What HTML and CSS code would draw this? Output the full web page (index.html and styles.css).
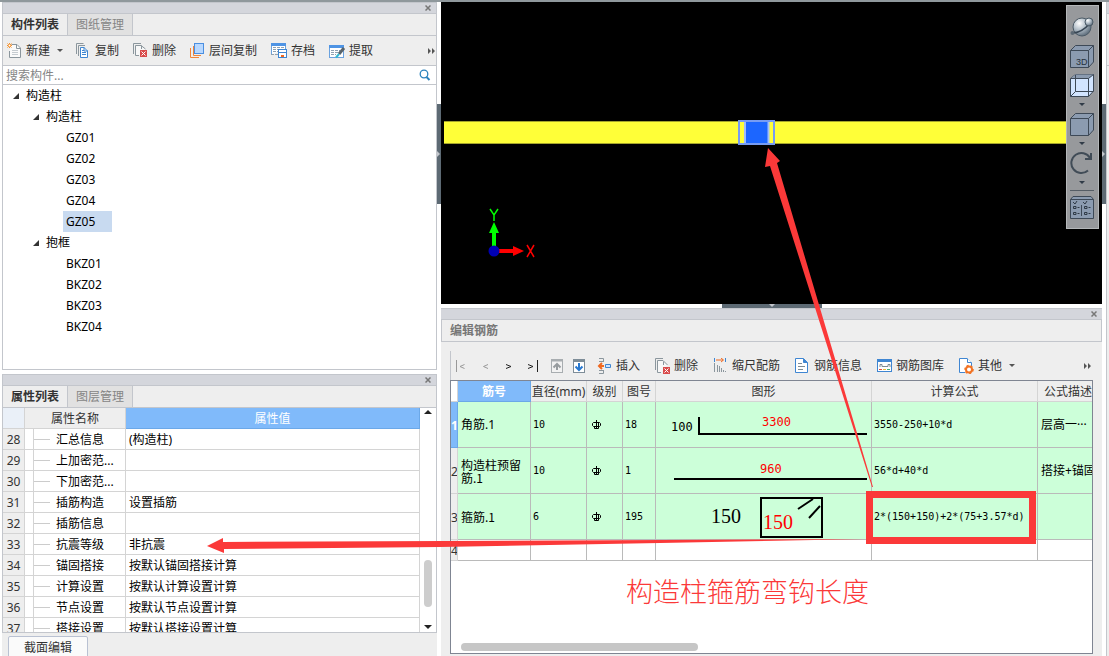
FILE: index.html
```html
<!DOCTYPE html>
<html lang="zh-CN">
<head>
<meta charset="utf-8">
<title>构件列表</title>
<link rel="stylesheet" href="styles.css">
</head>
<body>
<div class="app">
  <aside class="side">
    <section class="panel panel-list">
      <div class="titlebar"><button class="close" aria-label="关闭"><svg width="6" height="6" viewBox="0 0 6 6"><path d="M0.5 0.5L5.500 5.500M5.500 0.500L0.500 5.500"/></svg></button></div>
      <div class="tabs"><button class="tab tab-on">构件列表</button><button class="tab">图纸管理</button></div>
      <div class="toolbar">
        <button class="tool"><svg width="16" height="16" viewBox="0 0 16 16"><path d="M4.500 1.500H10L13.500 5V14.500H2.500V8" fill="#fafafa" stroke="#8b969d"/><path d="M9.500 1.500V5.500H13.500" fill="none" stroke="#8b969d"/><path d="M5 7.500H11M5 9.500H11M5 11.500H11" stroke="#c5cbd0"/><path d="M2.500 0V5M0 2.500H5M.5 .5L4.500 4.500M4.500 .5L.5 4.500" stroke="#f4902b"/><circle cx="2.500" cy="2.500" r="1" fill="#fff"/></svg>新建<i class="caret"></i></button>
        <button class="tool"><svg width="16" height="16" viewBox="0 0 16 16"><path d="M.5 11V.5H7.500" fill="none" stroke="#8b969d"/><path d="M2.500 13V2.500H9" fill="none" stroke="#8b969d"/><path d="M4.500 4.500H8L11.500 8V14.500H4.500Z" fill="#fff" stroke="#3f86d2"/><path d="M8 4V8H12" fill="none" stroke="#3f86d2"/><path d="M6 7.500H8M6 9.500H10M6 11.500H10" stroke="#3f86d2"/></svg>复制</button>
        <button class="tool"><svg width="16" height="16" viewBox="0 0 16 16"><path d="M.5 11V.5H8" fill="none" stroke="#8b969d"/><path d="M6 12.500H2.500V2.500H8L12.500 6" fill="#f7f7f7" stroke="#8b969d"/><path d="M8.500 2.500V6" stroke="#8b969d"/><rect x="7" y="7" width="7" height="7" fill="#d94b4b"/><path d="M8.500 8.500L12.500 12.500M12.500 8.500L8.500 12.500" stroke="#fff"/></svg>删除</button>
        <button class="tool"><svg width="16" height="16" viewBox="0 0 16 16"><path d="M.5 5V14.500H9" fill="none" stroke="#f0853a"/><path d="M3.500 3V12.500H11" fill="none" stroke="#f0853a"/><rect x="4.500" y=".5" width="9" height="10" fill="#b8d8ff" stroke="#4b8fe0"/></svg>层间复制</button>
        <button class="tool"><svg width="17" height="16" viewBox="0 0 17 16"><path d="M.5 11.500V.5H14.500V6" fill="#fff" stroke="#6aa2df"/><rect width="15" height="3" fill="#4f94e4"/><path d="M2 4.500H13M2 6.500H7M2 8.500H7M0 11.500H8" stroke="#8fa1b1" stroke-dasharray="3 1"/><rect x="7.500" y="6.500" width="8" height="8" fill="#fff" stroke="#3f86d2"/><path d="M8 9.500H15" stroke="#3f86d2"/><rect x="10" y="12" width="3" height="2" fill="#f06820"/></svg>存档</button>
        <button class="tool"><svg width="17" height="16" viewBox="0 0 17 16"><rect x=".5" y="2.500" width="14" height="12" fill="#fff" stroke="#6aa2df"/><rect y="2" width="15" height="3" fill="#4f94e4"/><path d="M2 7.500H11M2 9.500H9M2 11.500H7" stroke="#8fa1b1" stroke-dasharray="3 1"/><path d="M15 5L10 11" stroke="#59646c" stroke-width="3"/><path d="M10 11L7 14.500" stroke="#35b9d2" stroke-width="2"/></svg>提取</button>
        <button class="more" aria-label="更多"><svg width="8" height="6" viewBox="0 0 8 6"><path d="M0 0L3 3L0 6ZM4 0L7 3L4 6Z"/></svg></button>
      </div>
      <div class="search"><input type="text" placeholder="搜索构件..." aria-label="搜索构件"><svg width="12" height="12" viewBox="0 0 12 12"><circle cx="5" cy="5" r="3.800" fill="none" stroke="#2c83bd" stroke-width="1.300"/><path d="M7.500 8L10.500 11" stroke="#2c83bd" stroke-width="2"/></svg></div>
      <ul class="tree">
        <li><span class="node branch">构造柱</span>
          <ul>
            <li><span class="node branch">构造柱</span>
              <ul><li><span class="node">GZ01</span></li><li><span class="node">GZ02</span></li><li><span class="node">GZ03</span></li><li><span class="node">GZ04</span></li><li><span class="node node-on">GZ05</span></li></ul></li>
            <li><span class="node branch">抱框</span>
              <ul><li><span class="node">BKZ01</span></li><li><span class="node">BKZ02</span></li><li><span class="node">BKZ03</span></li><li><span class="node">BKZ04</span></li></ul></li>
          </ul></li>
      </ul>
    </section>
    <section class="panel panel-props">
      <div class="titlebar"><button class="close" aria-label="关闭"><svg width="6" height="6" viewBox="0 0 6 6"><path d="M0.5 0.5L5.500 5.500M5.500 0.500L0.500 5.500"/></svg></button></div>
      <div class="tabs"><button class="tab tab-on">属性列表</button><button class="tab">图层管理</button></div>
      <div class="props-body">
        <table class="props">
          <colgroup><col class="p-num"><col class="p-indent"><col class="p-name"><col></colgroup>
          <thead><tr><th class="corner"></th><th colspan="2">属性名称</th><th class="hot">属性值</th></tr></thead>
          <tbody>
            <tr><th>28</th><td></td><td>汇总信息</td><td>(构造柱)</td></tr>
            <tr><th>29</th><td></td><td>上加密范...</td><td></td></tr>
            <tr><th>30</th><td></td><td>下加密范...</td><td></td></tr>
            <tr><th>31</th><td></td><td>插筋构造</td><td>设置插筋</td></tr>
            <tr><th>32</th><td></td><td>插筋信息</td><td></td></tr>
            <tr><th>33</th><td></td><td>抗震等级</td><td>非抗震</td></tr>
            <tr><th>34</th><td></td><td>锚固搭接</td><td>按默认锚固搭接计算</td></tr>
            <tr><th>35</th><td></td><td>计算设置</td><td>按默认计算设置计算</td></tr>
            <tr><th>36</th><td></td><td>节点设置</td><td>按默认节点设置计算</td></tr>
            <tr><th>37</th><td></td><td>搭接设置</td><td>按默认搭接设置计算</td></tr>
          </tbody>
        </table>
        <div class="vscroll"><i class="arrow-up"></i><i class="thumb"></i><i class="arrow-down"></i></div>
      </div>
    </section>
    <div class="side-foot"><button class="section-btn">截面编辑</button></div>
  </aside>
  <div class="gutter"><i class="grip"></i></div>
  <main class="main">
    <div class="viewport">
      <svg class="scene" width="100%" height="100%">
        <rect x="3" y="119" height="23" class="wall-edge"/>
        <rect x="3" y="120" height="21" class="wall"/>
        <rect x="304" y="119" width="24" height="23" fill="#1c66ff"/>
        <path d="M304 119V142M327.500 119V142" stroke="#9ebcff" stroke-width="2"/>
        <rect x="298" y="119" width="35" height="23" fill="none" stroke="#779cf2" stroke-width="2"/>
        <path d="M53 247V229" stroke="#0f0" stroke-width="4"/><path d="M53 220L58 231H48Z" fill="#0f0"/>
        <path d="M55 249H75" stroke="#f00" stroke-width="4"/><path d="M83 249L72 244V254Z" fill="#f00"/>
        <circle cx="53" cy="249" r="5.500" fill="#0000b4"/>
        <path d="M49 207L53 213L57 207M53 213V219" fill="none" stroke="#0f0" stroke-width="1.500"/>
        <path d="M86 243L93 255M93 243L86 255" stroke="#f00" stroke-width="1.500"/>
      </svg>
      <div class="view-tools">
        <button aria-label="动态观察"><svg width="24" height="24" viewBox="0 0 24 24"><defs><radialGradient id="ball" cx=".35" cy=".3" r=".8"><stop offset="0" stop-color="#fff"/><stop offset=".45" stop-color="#b3bfc9"/><stop offset="1" stop-color="#4b5b6a"/></radialGradient></defs><circle cx="12" cy="12" r="9" fill="url(#ball)" stroke="#4b5a66"/><path d="M2 18Q12 18 20 8" fill="none" stroke="#384654" stroke-width="1.500"/><circle cx="19" cy="7" r="4" fill="url(#ball)" stroke="#4b5a66"/><circle cx="2.500" cy="18" r="2" fill="#5b6873"/></svg></button>
        <button aria-label="三维"><svg width="24" height="24" viewBox="0 0 24 24"><path d="M.5 6.500L5.500 1.500H23.500V18L18.500 23.500H.5Z" fill="#8b9bb0" stroke="#3d4957"/><path d="M.5 6.500H18.500V23.500M18.500 6.500L23.500 1.500" fill="none" stroke="#3d4957"/><text x="6" y="21" class="cube-label">3D</text></svg></button>
        <button aria-label="线框"><svg width="24" height="24" viewBox="0 0 24 24"><path d="M.5 5.500L5.500 1.500H23.500V18L18.500 23.500H.5Z" fill="#d2e5ff" stroke="#3d4957"/><path d="M.5 5.500L5.500 1.500H23.500L18.500 5.500Z" fill="#8b9bb0"/><path d="M.5 5.500H18.500V23.500M18.500 5.500L23.500 1.500M5.500 2V18.500H23.500M5.500 18.500L.5 23.500" fill="none" stroke="#3d4957"/></svg></button>
        <i class="caret-box"></i>
        <button aria-label="实体"><svg width="24" height="24" viewBox="0 0 24 24"><path d="M.5 6.500L5.500 1.500H23.500V18L18.500 23.500H.5Z" fill="#8b9bb0" stroke="#3d4957"/><path d="M.5 6.500H18.500V23.500M18.500 6.500L23.500 1.500" fill="none" stroke="#3d4957"/></svg></button>
        <i class="caret-box"></i>
        <button aria-label="旋转"><svg width="24" height="24" viewBox="0 0 24 24"><path d="M18 19.500A10 10 0 1 1 20 7" fill="none" stroke="#414c57" stroke-width="2"/><path d="M21 2V8H15" fill="none" stroke="#414c57" stroke-width="2"/></svg></button>
        <i class="caret-box"></i>
        <hr>
        <button aria-label="显示设置"><svg width="24" height="24" viewBox="0 0 24 24"><path d="M.5 23.500V4.500L3 1.500H21L23.500 4.500V23.500Z" fill="#8b9bb0" stroke="#3d4957"/><path d="M.5 4.500H23.500M11.500 10V21" stroke="#3d4957"/><path d="M3 7L5 9L7 6M13 7L15 9L17 6M3.500 11.500H6V13.500H3.500ZM3.500 17.500H6V19.500H3.500ZM14.500 11.500H17V13.500H14.500ZM14.500 17.500H17V19.500H14.500Z" fill="none" stroke="#2f3a46"/><path d="M7.500 12.500H9.500M7.500 18.500H9.500M18.500 12.500H20.500M18.500 18.500H20.500" stroke="#2f3a46"/></svg></button>
      </div>
    </div>
    <div class="hgutter"><i class="hgrip"></i></div>
    <section class="editor">
      <div class="titlebar"><button class="close" aria-label="关闭"><svg width="6" height="6" viewBox="0 0 6 6"><path d="M0.5 0.5L5.500 5.500M5.500 0.500L0.500 5.500"/></svg></button></div>
      <h2 class="editor-title">编辑钢筋</h2>
      <div class="editor-body">
        <div class="toolbar bar-edit">
          <div class="nav">
            <button class="off" aria-label="首行"><svg width="10" height="12" viewBox="0 0 10 12"><path d="M.5 0V12M8.500 4.500L4 6.500L8.500 8.500"/></svg></button>
            <button class="off" aria-label="上一行"><svg width="10" height="12" viewBox="0 0 10 12"><path d="M8 4.500L3.500 6.500L8 8.500"/></svg></button>
            <button aria-label="下一行"><svg width="10" height="12" viewBox="0 0 10 12"><path d="M2 4.500L7 6.500L2 8.500"/></svg></button>
            <button aria-label="末行"><svg width="10" height="12" viewBox="0 0 10 12"><path d="M0 4.500L5 6.500L0 8.500M9.500 0V12"/></svg></button>
          </div>
          <div class="move">
            <button aria-label="上移"><svg width="12" height="14" viewBox="0 0 12 14"><rect x=".5" y=".5" width="11" height="13" fill="#f2f2f2" stroke="#a8adb0"/><path d="M0 1.500H12" stroke="#a8adb0" stroke-width="2"/><path d="M6 11V5M2.500 8.500L6 5L9.500 8.500" fill="none" stroke="#979c9f" stroke-width="2"/></svg></button>
            <button aria-label="下移"><svg width="12" height="14" viewBox="0 0 12 14"><rect x=".5" y=".5" width="11" height="13" fill="#fff" stroke="#7e8d98"/><path d="M0 1.500H12" stroke="#7e8d98" stroke-width="3"/><path d="M6 4V11M2.500 7.500L6 11L9.500 7.500" fill="none" stroke="#2878d0" stroke-width="2"/></svg></button>
          </div>
          <button class="tool"><svg width="16" height="16" viewBox="0 0 16 16"><path d="M2 .5H6.500V4M2 15.500H6.500V12M2 3.500H6M2 12.500H6" fill="none" stroke="#8b969d"/><path d="M7 8H2M5 5L2 8L5 11" fill="none" stroke="#f06820" stroke-width="2"/><path d="M8.500 6.500H13.500V9.500H8.500Z" fill="#cfe4ff" stroke="#3f86d2"/></svg>插入</button>
          <button class="tool"><svg width="16" height="16" viewBox="0 0 16 16"><path d="M.5 12V.5H8" fill="none" stroke="#8b969d"/><path d="M6 14.500H2.500V2.500H8L12.500 7" fill="#f7f7f7" stroke="#8b969d"/><path d="M8.500 3.500V7" stroke="#8b969d"/><rect x="8" y="9" width="7" height="7" fill="#d94b4b"/><path d="M9.500 10.500L13.500 14.500M13.500 10.500L9.500 14.500" stroke="#fff"/></svg>删除</button>
          <button class="tool"><svg width="16" height="16" viewBox="0 0 16 16"><path d="M1.500 0V4M12.500 0V4" stroke="#3f86d2"/><path d="M3 2H10M8 0L10.500 2L8 4" fill="none" stroke="#f06820"/><path d="M1.500 5V14M4.500 7V14M6.500 8V14M8.500 10V14M10.500 12V14M12.500 13V14" stroke="#8b969d"/></svg>缩尺配筋</button>
          <button class="tool"><svg width="16" height="16" viewBox="0 0 16 16"><path d="M.5 .5H8L12.500 5V14.500H.5Z" fill="#fff" stroke="#3f86d2"/><path d="M8.500 .5V4.500H12.500Z" fill="#3f86d2" stroke="#3f86d2"/><path d="M3 5.500H7M3 8.500H10M3 11.500H8" stroke="#7f8b93"/></svg>钢筋信息</button>
          <button class="tool"><svg width="16" height="16" viewBox="0 0 16 16"><rect x=".5" y="1.500" width="14" height="12" fill="#fff" stroke="#3f86d2"/><path d="M0 2.500H15" stroke="#3f86d2" stroke-width="3"/><path d="M3 9V6.500H5V8.500H11V6.500H13V9" fill="none" stroke="#7f8b93"/><path d="M2 11.500H5" stroke="#e34b42"/><path d="M6 11.500H9" stroke="#e9bd31"/><path d="M10 11.500H13" stroke="#46b276"/></svg>钢筋图库</button>
          <button class="tool"><svg width="16" height="16" viewBox="0 0 16 16"><path d="M6 14.500H.5V.5H8L12.500 5V8" fill="#fff" stroke="#3f86d2"/><path d="M8.500 .5V4.500H12.500" fill="#fff" stroke="#3f86d2"/><circle cx="10" cy="11.500" r="3" fill="#fff" stroke="#f27324" stroke-width="2"/><circle cx="10" cy="11.500" r="4" fill="none" stroke="#f27324" stroke-width="1.500" stroke-dasharray="2 2"/></svg>其他<i class="caret"></i></button>
          <button class="more" aria-label="更多"><svg width="8" height="6" viewBox="0 0 8 6"><path d="M0 0L3 3L0 6ZM4 0L7 3L4 6Z"/></svg></button>
        </div>
        <div class="grid-wrap">
          <table class="grid">
            <colgroup><col class="g-row"><col class="g-no"><col class="g-dia"><col class="g-level"><col class="g-fig"><col><col class="g-formula"><col class="g-desc"></colgroup>
            <thead><tr><th class="blank"></th><th class="hot">筋号</th><th>直径(mm)</th><th>级别</th><th>图号</th><th>图形</th><th>计算公式</th><th class="clip">公式描述</th></tr></thead>
            <tbody>
              <tr><th class="hot">1</th><td class="named">角筋.1</td><td class="mono">10</td><td><svg class="level" width="9" height="10" viewBox="0 0 9 10"><path d="M1.500 2.500H7.500L8.500 3.500V5.500L7.500 6.500H1.500L.5 5.500V3.500ZM4.500 0V9M2.500 6.500V8.500H6.500V2.500"/></svg></td><td class="mono">18</td>
                <td class="shape"><svg width="214" height="45"><text class="num" x="15" y="29">100</text><path d="M43 15V32H211" class="bar"/><text class="num red" x="106" y="24">3300</text></svg></td><td class="mono">3550-250+10*d</td><td class="clip">层高一···</td></tr>
              <tr><th>2</th><td class="song">构造柱预留筋.1</td><td class="mono">10</td><td><svg class="level" width="9" height="10" viewBox="0 0 9 10"><path d="M1.500 2.500H7.500L8.500 3.500V5.500L7.500 6.500H1.500L.5 5.500V3.500ZM4.500 0V9M2.500 6.500V8.500H6.500V2.500"/></svg></td><td class="mono">1</td>
                <td class="shape"><svg width="214" height="45"><path d="M18 31H211" class="bar"/><text class="num red" x="104" y="25">960</text></svg></td><td class="mono">56*d+40*d</td><td class="clip">搭接+锚固</td></tr>
              <tr><th>3</th><td class="song">箍筋.1</td><td class="mono">6</td><td><svg class="level" width="9" height="10" viewBox="0 0 9 10"><path d="M1.500 2.500H7.500L8.500 3.500V5.500L7.500 6.500H1.500L.5 5.500V3.500ZM4.500 0V9M2.500 6.500V8.500H6.500V2.500"/></svg></td><td class="mono">195</td>
                <td class="shape"><svg width="214" height="45"><text class="big" x="55" y="29">150</text><rect x="105" y="4" width="61" height="39" class="bar"/><path d="M142 15L157 5M153 24L164 12" class="bar"/><text class="big red" x="107" y="35">150</text></svg></td><td class="mono">2*(150+150)+2*(75+3.57*d)</td><td></td></tr>
              <tr class="empty"><th>4</th><td></td><td></td><td></td><td></td><td></td><td></td><td></td></tr>
            </tbody>
          </table>
          <i class="hthumb"></i>
        </div>
      </div>
    </section>
  </main>
  <div class="gutter"><i class="grip"></i></div>
  <div class="dock"></div>
  <svg class="notes" width="1109" height="656">
    <path d="M768 148L780 161L777 163L873 487L872 487L770 166L765 167Z"/>
    <path d="M207 546L223 538V542L867 539L660 543L440 547L224 549V553Z"/>
    <rect x="869.500" y="494.500" width="163" height="46" class="frame"/>
    <text x="626" y="602">构造柱箍筋弯钩长度</text>
  </svg>
</div>
</body>
</html>
```
FILE: styles.css
```css
* { box-sizing: border-box; }
body { margin: 0; font: 12px/20px "Noto Sans", "Noto Sans CJK SC", sans-serif; color: #333; background: #fff; }
button { border: 0; padding: 0; background: none; font: inherit; color: inherit; display: flex; align-items: center; }
svg { display: block; flex: none; }
i { display: block; flex: none; }
ul { list-style: none; margin: 0; padding: 0; }
table { border-collapse: separate; border-spacing: 0; table-layout: fixed; width: 100%; }
th { font-weight: normal; }
th, td { padding: 0; overflow: hidden; white-space: nowrap; }

.app { position: relative; display: flex; height: 100vh; min-height: 640px; padding-left: 2px; border-top: 2px solid #8f989c; overflow: hidden; }
.side { width: 435px; flex: none; display: flex; flex-direction: column; }
.panel { border: 1px solid #c3c6cc; background: #fff; display: flex; flex-direction: column; overflow: hidden; }
.panel-list { flex: 1; margin-bottom: 4px; }
.panel-props { height: 259px; flex: none; }
.titlebar { height: 11px; flex: none; background: #d4d6dc; border-bottom: 1px solid #c3c6cc; display: flex; justify-content: flex-end; align-items: center; padding-right: 5px; }
.close path { stroke: #777; stroke-width: 1.5; fill: none; }
.tabs { height: 22px; flex: none; display: flex; background: #eee; border-bottom: 1px solid #c3c6cc; }
.tab { width: 65px; justify-content: center; color: #858585; background: #e1e1e1; border-right: 1px solid #c3c6cc; }
.tab-on { font-weight: 700; color: #333; background: #eee; }
.toolbar { height: 30px; flex: none; display: flex; align-items: center; gap: 14px; padding-left: 4px; background: #eee; border-bottom: 1px solid #c3c6cc; }
.tool { gap: 3px; white-space: nowrap; }
.caret { border: 3px solid transparent; border-top-color: #555; border-bottom: 0; margin: 0 -1px 0 4px; }
.more { margin-left: auto; }
.more path { fill: #555; }
.search { height: 19px; flex: none; display: flex; align-items: center; padding-right: 5px; border-bottom: 1px solid #c3c6cc; }
.search input { flex: 1; min-width: 0; height: 18px; border: 0; padding: 1px 3px 0; font: inherit; outline: 0; background: none; }
.search input::placeholder { color: #858585; opacity: 1; }

.tree { padding-left: 7px; color: #000; line-height: 21px; }
.tree ul { padding-left: 20px; }
.node { display: inline-flex; align-items: center; height: 21px; padding: 0 17px 0 3px; margin-left: 13px; vertical-align: top; }
.branch { margin-left: 3px; padding-left: 0; gap: 7px; }
.branch::before { content: ""; border: 3px solid #333; border-top-color: transparent; border-left-color: transparent; }
.node-on { background: #c8daf0; }

.props-body { flex: 1; min-height: 0; display: flex; align-items: stretch; overflow: hidden; }
.props { flex: 1; width: auto; color: #000; align-self: flex-start; }
.p-num { width: 22px; }
.p-indent { width: 9px; }
.p-name { width: 92px; }
.props th, .props td { height: 21px; padding-top: 1px; line-height: 19px; border-right: 1px solid #d4d4d4; border-bottom: 1px solid #d4d4d4; text-align: left; }
.props th { background: #eee; color: #333; text-align: center; }
.props .corner { background: #eaf0f8; }
.props .hot { background: #80bafa; color: #fff; border-color: #6ba8e8; }
.props td:nth-child(4) { padding-left: 3px; }
.props td:nth-child(3)::before { content: ""; display: inline-block; width: 16px; height: 1px; margin-right: 6px; background: #ccc; vertical-align: 4px; }
.vscroll { width: 16px; flex: none; display: flex; flex-direction: column; align-items: center; padding: 2px 0 3px; }
.arrow-up { border: 4px solid transparent; border-bottom-color: #222; border-top: 0; }
.arrow-down { border: 4px solid transparent; border-top-color: #222; border-bottom: 0; }
.thumb { width: 8px; height: 47px; margin: auto 0 18px; border-radius: 4px; background: #cdcdcd; }
.side-foot { height: 23px; flex: none; background: #eee; padding: 3px 6px 0; overflow: hidden; }
.section-btn { height: 24px; width: 80px; justify-content: center; border: 1px solid #b9c1d2; border-radius: 2px; background: #fafafa; }

.gutter { width: 4px; flex: none; padding-top: 102px; }
.grip { height: 100px; background: #5d6a74; display: flex; align-items: center; }
.grip::before { content: ""; border: 3px solid transparent; border-left-color: #c3c6cc; border-right: 0; }
.dock { width: 3px; flex: none; background: linear-gradient(#d4d6dc 11px, #c3c6cc 11px 12px, #eee 12px 63px, #c3c6cc 63px 64px, #eee 64px); border-left: 1px solid #c3c6cc; }

.main { flex: 1; min-width: 0; display: flex; flex-direction: column; }
.viewport { flex: 1; position: relative; background: #000; overflow: hidden; }
.scene { position: absolute; inset: 0; }
.wall, .wall-edge { width: calc(100% - 39px); fill: #ffff38; }
.wall-edge { fill: #a5a52c; }
.view-tools { position: absolute; top: 3px; right: 3px; width: 33px; padding: 9px 1px 9px 0; border: 1px solid #b5b8ba; background: #97999c; display: flex; flex-direction: column; align-items: center; gap: 5px; }
.view-tools hr { width: 24px; margin: 0 0 -1px; border: 0; border-top: 1px solid #555d65; }
.caret-box { height: 5px; display: flex; align-items: center; }
.caret-box::before { content: ""; border: 3px solid transparent; border-top-color: #303b47; border-bottom: 0; }
.cube-label { font: 9px "Liberation Sans", sans-serif; fill: #26313c; }
.hgutter { height: 4px; flex: none; display: flex; justify-content: center; }
.hgrip { width: 100px; background: #5d6a74; display: flex; justify-content: center; }
.hgrip::before { content: ""; border: 3px solid transparent; border-top-color: #c3c6cc; border-bottom: 0; }

.editor { height: 348px; flex: none; display: flex; flex-direction: column; background: #eee; border-top: 1px solid #c3c6cc; }
.editor-title { height: 22px; flex: none; margin: 0; padding-left: 8px; font-size: 12px; line-height: 21px; font-weight: 700; color: #777; border: 1px solid #c3c6cc; border-top: 0; }
.editor-body { flex: 1; min-height: 0; margin: 9px 9px 2px; display: flex; flex-direction: column; }
.bar-edit { gap: 15px; padding-left: 5px; padding-right: 1px; height: 29px; border: 0; border-left: 1px solid #c3c6cc; }
.nav { display: flex; gap: 14px; margin-right: -2px; }
.nav path { fill: none; stroke: #222; }
.nav .off path { stroke: #999; }
.move { display: flex; gap: 10px; margin-right: -3px; }
.grid-wrap { flex: 1; min-height: 0; display: flex; flex-direction: column; background: #fff; border: 1px solid #7f8592; overflow: hidden; }
.grid { color: #000; }
.g-row { width: 7px; }
.g-no { width: 73px; }
.g-dia { width: 56px; }
.g-level { width: 36px; }
.g-fig { width: 33px; }
.g-formula { width: 166px; }
.g-desc { width: 54px; }
.grid th, .grid td { border-right: 1px solid #bababa; border-bottom: 1px solid #bababa; }
.grid td { height: 46px; padding-left: 3px; background: #ccffd9; }
.grid th { height: 21px; line-height: 19px; padding-top: 1px; background: #eee; color: #333; border-color: #d4d4d4; }
.grid tbody th { text-align: center; }
.grid .blank { background: #fff; }
.grid .hot { background: #80bafa; color: #fff; font-weight: 700; border-color: #6ba8e8; }
.grid tr > :last-child { border-right: 0; }
.grid thead .clip { padding-left: 6px; text-align: left; }
.grid .clip { text-overflow: clip; }
.grid .empty td { height: 21px; background: #fff; }
.grid .mono { padding-left: 2px; font: 10px/20px "DejaVu Sans Mono", monospace; }
.grid .song { font-family: "Noto Sans CJK SC", sans-serif; line-height: 13px; white-space: normal; }
.grid .shape { padding: 0; }
.level { margin-left: 2px; }
.level path { fill: none; stroke: #000; }
.bar { fill: none; stroke: #000; stroke-width: 2; }
.num { font: 12px "DejaVu Sans Mono", monospace; }
.big { font: 20px "Liberation Serif", serif; }
.red { fill: #f00; }
.hthumb { width: 237px; height: 8px; margin: auto 0 2px 10px; border-radius: 4px; background: #c6c6c6; }

.notes { position: absolute; top: -2px; left: 0; pointer-events: none; }
.notes path { fill: #fb3939; }
.notes .frame { fill: none; stroke: #fb3939; stroke-width: 7; }
.notes text { font: 300 27px "Noto Sans CJK SC", sans-serif; fill: #fb3939; }
```
